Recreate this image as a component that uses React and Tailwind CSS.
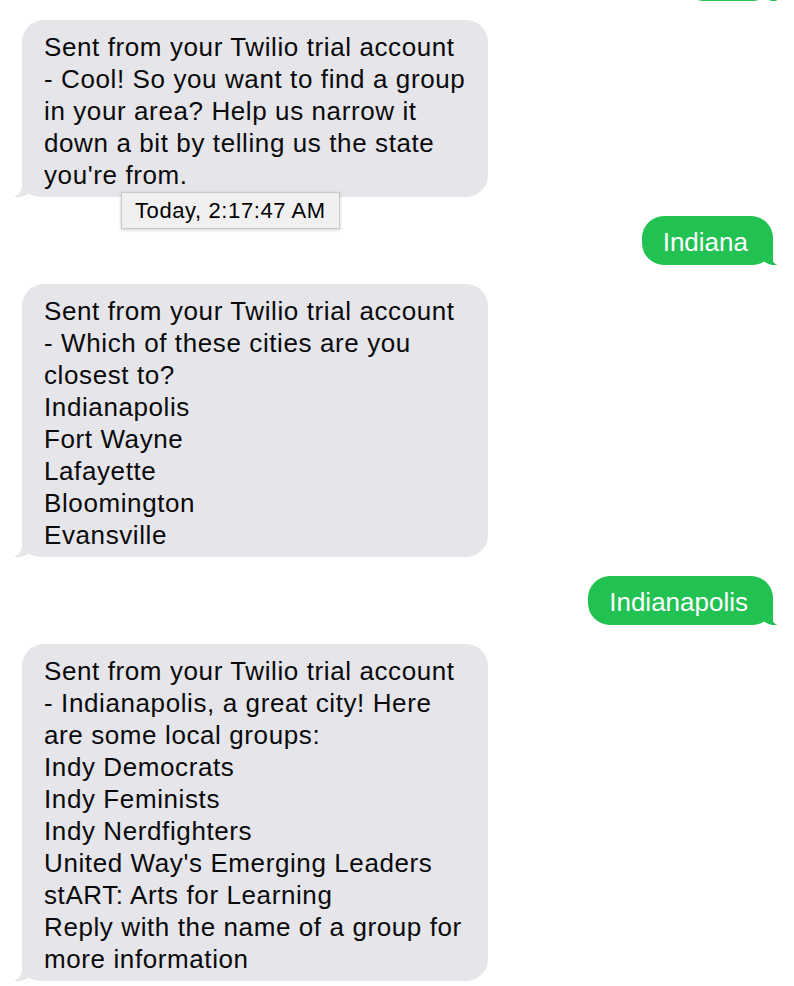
const font = { fontFamily: '"Liberation Sans", Arial, sans-serif' };

const GrayTail = () => (
  <svg className="absolute left-[-10px] bottom-0" width="40" height="24" viewBox="0 0 40 24">
    <rect x="10" y="0" width="30" height="24" fill="#ffffff" />
    <path d="M10 0 L10 12 C10 18 7 22 1.5 24 C6 24.5 12 23.5 17 20.5 C20 22.5 24 24 30 24 L40 24 L40 0 Z" fill="#e5e5ea" />
  </svg>
);

const GreenTail = () => (
  <svg className="absolute right-[-8px] bottom-0 -scale-x-100" width="40" height="24" viewBox="0 0 40 24">
    <rect x="10" y="0" width="30" height="24" fill="#ffffff" />
    <path d="M10 0 L10 13 C10 18 8 22 3.5 24 C8 24.5 13 23.5 17 20.5 C20 22.5 24 24 30 24 L40 24 L40 0 Z" fill="#21c152" />
  </svg>
);

const Incoming = ({ lines, children }) => (
  <div className="relative self-start w-[466px] rounded-[22px] rounded-bl-none bg-[#e5e5ea] pl-[22px] pr-4 pt-[10.5px] pb-[6.5px] text-[26px] leading-8 tracking-[0.6px] text-[#0a0a0a]">
    <GrayTail />
    {lines.map((line, i) => (
      <div key={i} className="relative whitespace-nowrap">{line}</div>
    ))}
    {children}
  </div>
);

const Outgoing = ({ text }) => (
  <div className="relative self-end rounded-[22px] rounded-br-none bg-[#21c152] pl-[21px] pr-[25px] pt-[9.5px] pb-[7.5px] text-[26px] leading-8 text-white">
    <GreenTail />
    <span className="relative whitespace-nowrap">{text}</span>
  </div>
);

export default function App() {
  return (
    <div className="min-h-screen overflow-hidden bg-white pl-[22px] pr-[21px]" style={font}>
      <div className="flex flex-col gap-[19px] pb-8">
        {/* bottom of the previous sent message, scrolled off the top */}
        <div className="relative self-end mt-[-48px] h-[49px] w-[91px] rounded-[22px] rounded-br-none bg-[#21c152]">
          <GreenTail />
        </div>

        <Incoming
          lines={[
            "Sent from your Twilio trial account",
            "- Cool! So you want to find a group",
            "in your area? Help us narrow it",
            "down a bit by telling us the state",
            "you're from.",
          ]}
        >
          <div className="absolute left-[99px] top-[172px] z-10 w-[219px] h-[37px] border border-[#c9c9c9] bg-[#f0f0f0] pl-[13px] text-[22px] leading-[35px] tracking-[0.6px] text-black shadow-[0_1px_3px_rgba(0,0,0,0.2)]">
            Today, 2:17:47 AM
          </div>
        </Incoming>

        <Outgoing text="Indiana" />

        <Incoming
          lines={[
            "Sent from your Twilio trial account",
            "- Which of these cities are you",
            "closest to?",
            "Indianapolis",
            "Fort Wayne",
            "Lafayette",
            "Bloomington",
            "Evansville",
          ]}
        />

        <Outgoing text="Indianapolis" />

        <Incoming
          lines={[
            "Sent from your Twilio trial account",
            "- Indianapolis, a great city! Here",
            "are some local groups:",
            "Indy Democrats",
            "Indy Feminists",
            "Indy Nerdfighters",
            "United Way's Emerging Leaders",
            "stART: Arts for Learning",
            "Reply with the name of a group for",
            "more information",
          ]}
        />
      </div>
    </div>
  );
}
